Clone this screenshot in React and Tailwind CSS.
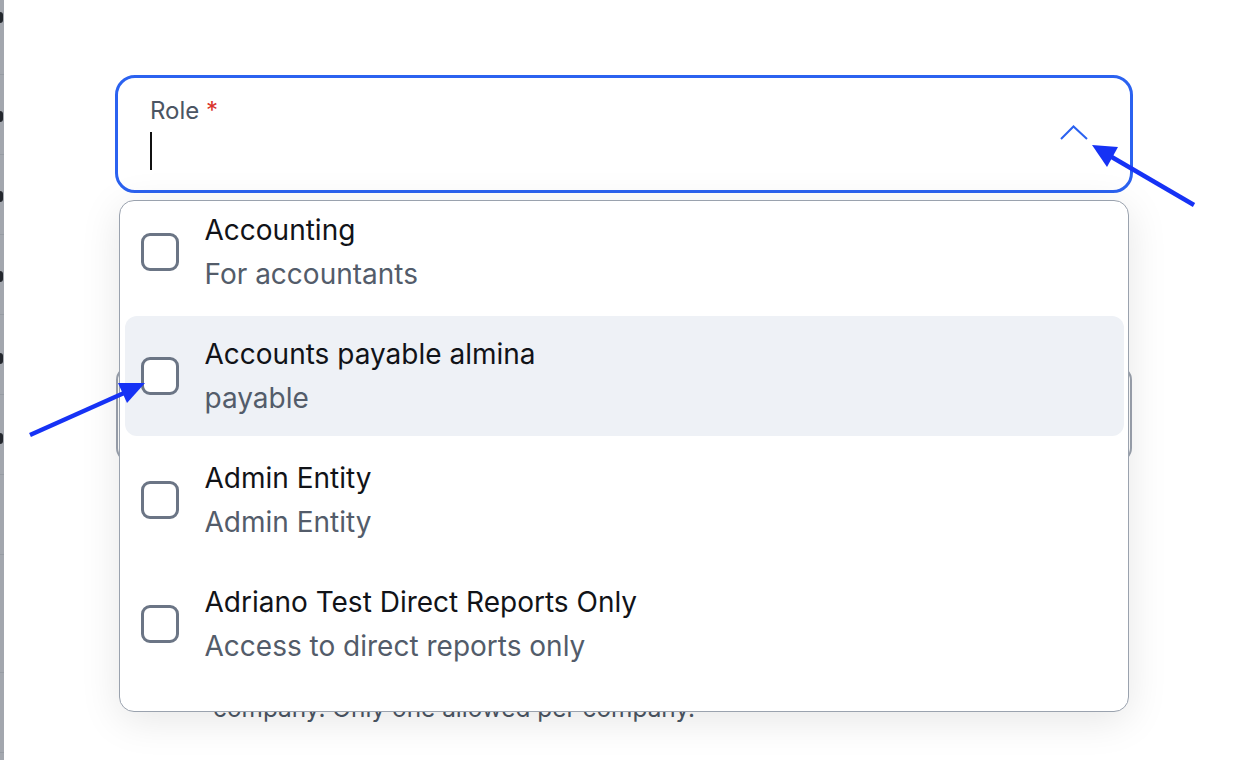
import React from "react";

const rows = [
  { h: 75, g: true, gy: 12 },
  { h: 80, g: true, gy: 36 },
  { h: 80, g: true, gy: 36 },
  { h: 80, g: true, gy: 36 },
  { h: 80, g: true, gy: 38 },
  { h: 80, g: true, gy: 38 },
  { h: 80, g: false, gy: 0 },
  { h: 118, g: false, gy: 0 },
  { h: 80, g: false, gy: 0 },
];

function LeftStrip() {
  return (
    <div className="w-[4px] h-full bg-[#a3a7ae] flex flex-col shrink-0 overflow-hidden">
      {rows.map((r, i) => (
        <div
          key={i}
          style={{ height: r.h }}
          className="shrink-0 border-b border-[#979ca3] flex items-start overflow-hidden"
        >
          {r.g && (
            <div
              style={{ marginTop: r.gy }}
              className="w-[2.5px] h-[11px] rounded-r-full bg-[#23272d]"
            />
          )}
        </div>
      ))}
    </div>
  );
}

function Checkbox() {
  return (
    <div className="w-[38px] h-[38px] shrink-0 rounded-[9px] border-[3px] border-[#6b7585] bg-white" />
  );
}

function Item({ title, sub, active }) {
  return (
    <div
      className={
        "h-[120px] shrink-0 rounded-[12px] flex items-center pl-[16px] " +
        (active ? "bg-[#eef1f6]" : "")
      }
    >
      <Checkbox />
      <div className="ml-[26px] flex flex-col">
        <div className="text-[28px] leading-[44px] text-[#111318]">{title}</div>
        <div className="text-[28px] leading-[44px] text-[#535c6a]">{sub}</div>
      </div>
    </div>
  );
}

export default function App() {
  return (
    <div className="relative w-[1244px] h-[760px] bg-white overflow-hidden flex font-['Inter',sans-serif]">
      <LeftStrip />
      <div className="relative flex-1 flex flex-col pl-[111px] pt-[75px]">
        {/* Role input */}
        <div className="w-[1018px] h-[118px] rounded-[20px] border-[3px] border-[#2b62f0] flex items-center">
          <div className="flex-1 flex flex-col pl-[32px] self-start mt-[18px]">
            <div className="text-[24px] leading-[30px] text-[#4b5563]">
              Role <span className="text-[#d9342b]">*</span>
            </div>
            <div className="mt-[6px] w-[2px] h-[38px] bg-[#111]" />
          </div>
          <svg width="28" height="16" viewBox="0 0 28 16" className="mr-[42px] mt-[-2px]" fill="none">
            <path d="M1 14 L13.5 1.5 L27 14" stroke="#2b62f0" strokeWidth="2" />
          </svg>
        </div>

        {/* underlying field, mostly hidden */}
        <div className="ml-[1px] mt-[173px] w-[1016px] h-[96px] rounded-[14px] border-2 border-[#9ca3af]" />
        <div className="ml-[98px] mt-[231px] text-[24.4px] leading-[30px] text-[#4b5563]">
          company. Only one allowed per company.
        </div>

        {/* Dropdown menu */}
        <div className="absolute left-[115px] top-[200px] w-[1010px] h-[512px] rounded-[15px] border-[1.5px] border-[#9aa2ae] bg-white shadow-[0_8px_40px_rgba(0,0,0,0.10)] overflow-hidden px-[4.5px]">
          <div className="flex flex-col gap-[4px] mt-[-9.5px]">
            <Item title="Accounting" sub="For accountants" />
            <Item title="Accounts payable almina" sub="payable" active />
            <Item title="Admin Entity" sub="Admin Entity" />
            <Item title="Adriano Test Direct Reports Only" sub="Access to direct reports only" />
          </div>
        </div>
      </div>

      {/* annotation arrows */}
      <svg className="absolute inset-0 pointer-events-none" width="1244" height="760" viewBox="0 0 1244 760">
        <line x1="1194" y1="205" x2="1110" y2="156" stroke="#1632f5" strokeWidth="4.5" />
        <polygon points="1092,145 1118,147 1107,167" fill="#1632f5" />
        <line x1="30" y1="435" x2="124" y2="393" stroke="#1632f5" strokeWidth="4.5" />
        <polygon points="145,383 118,383 127,403" fill="#1632f5" />
      </svg>
    </div>
  );
}
